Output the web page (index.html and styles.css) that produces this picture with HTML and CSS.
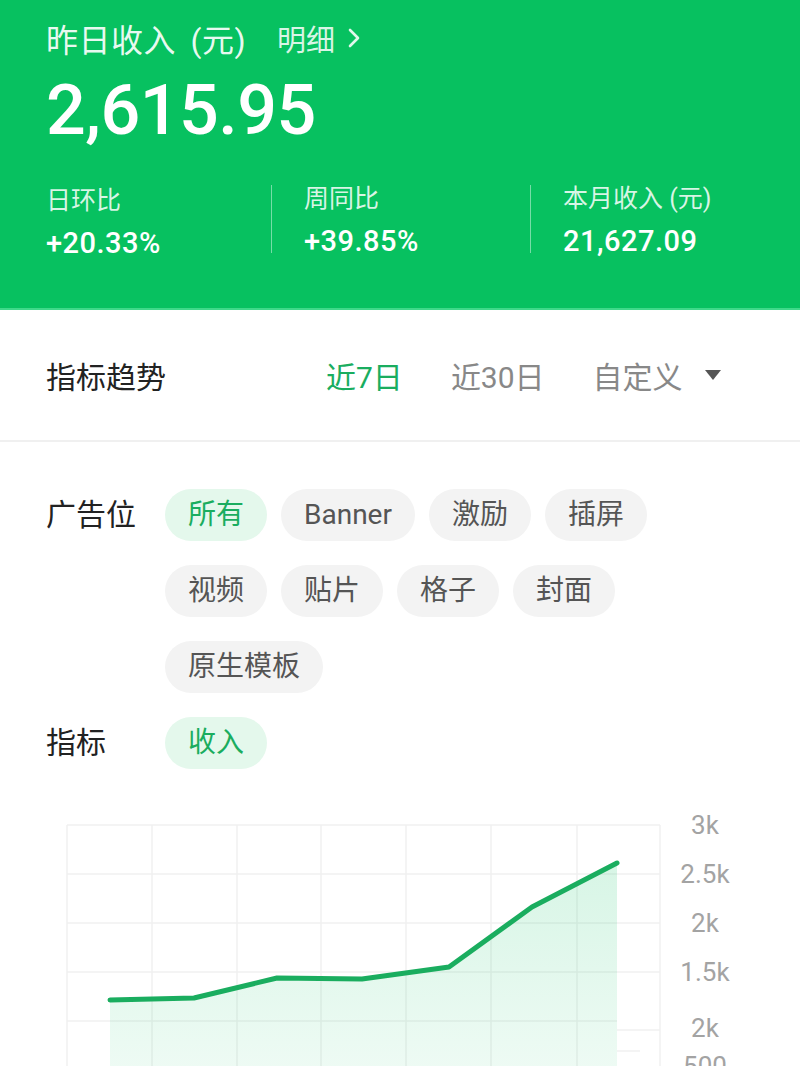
FILE: index.html
```html
<!DOCTYPE html>
<html lang="zh">
<head>
<meta charset="utf-8">
<title>收入</title>
<link rel="stylesheet" href="styles.css">
</head>
<body>
<div class="page">
  <header class="hero">
    <div class="hero-title">
      <span class="hero-label">昨日收入 (元)</span>
      <span class="hero-link">明细
        <svg class="chev" width="14" height="22" viewBox="0 0 14 22" xmlns="http://www.w3.org/2000/svg"><path d="M3 3 L11 11 L3 19" fill="none" stroke="rgba(255,255,255,0.88)" stroke-width="2.6" stroke-linecap="round" stroke-linejoin="round"/></svg>
      </span>
    </div>
    <div class="hero-amount">2,615.95</div>
    <div class="stats">
      <div class="stat">
        <div class="stat-label">日环比</div>
        <div class="stat-value">+20.33%</div>
      </div>
      <div class="stat stat-div">
        <div class="stat-label">周同比</div>
        <div class="stat-value">+39.85%</div>
      </div>
      <div class="stat stat-div">
        <div class="stat-label">本月收入 (元)</div>
        <div class="stat-value">21,627.09</div>
      </div>
    </div>
  </header>

  <section class="trend">
    <div class="trend-title">指标趋势</div>
    <div class="tabs">
      <span class="tab active">近7日</span>
      <span class="tab">近30日</span>
      <span class="tab tab-drop">自定义 <span class="tri"></span></span>
    </div>
  </section>

  <section class="filters">
    <div class="filter-row">
      <div class="filter-label">广告位</div>
      <div class="chips">
        <span class="chip on">所有</span>
        <span class="chip">Banner</span>
        <span class="chip">激励</span>
        <span class="chip">插屏</span>
        <span class="chip">视频</span>
        <span class="chip">贴片</span>
        <span class="chip">格子</span>
        <span class="chip">封面</span>
        <span class="chip">原生模板</span>
      </div>
    </div>
    <div class="filter-row">
      <div class="filter-label">指标</div>
      <div class="chips">
        <span class="chip on">收入</span>
      </div>
    </div>
  </section>

  <div class="chart">
    <svg width="800" height="266" viewBox="0 800 800 266" xmlns="http://www.w3.org/2000/svg">
      <defs>
        <linearGradient id="fillg" x1="0" y1="0" x2="0" y2="1">
          <stop offset="0" stop-color="#07c160" stop-opacity="0.16"/>
          <stop offset="1" stop-color="#07c160" stop-opacity="0.07"/>
        </linearGradient>
      </defs>
      <g stroke="#f0f0f0" stroke-width="1.5" fill="none">
        <line x1="67" y1="824" x2="660" y2="824"/>
        <line x1="67" y1="873" x2="660" y2="873"/>
        <line x1="67" y1="922" x2="660" y2="922"/>
        <line x1="67" y1="971" x2="660" y2="971"/>
        <line x1="67" y1="1020" x2="617" y2="1020"/>
        <line x1="617" y1="1029" x2="660" y2="1029"/>
        <line x1="617" y1="1050" x2="640" y2="1050"/>
        <line x1="67" y1="824" x2="67" y2="1066"/>
        <line x1="152" y1="824" x2="152" y2="1066"/>
        <line x1="237" y1="824" x2="237" y2="1066"/>
        <line x1="321" y1="824" x2="321" y2="1066"/>
        <line x1="406" y1="824" x2="406" y2="1066"/>
        <line x1="491" y1="824" x2="491" y2="1066"/>
        <line x1="577" y1="824" x2="577" y2="1066"/>
        <line x1="660" y1="824" x2="660" y2="1066"/>
      </g>
      <path d="M110 999 L194 997 L277 977 L362 978 L449 966 L532 906 L617 862 L617 1066 L110 1066 Z" fill="url(#fillg)"/>
      <path d="M110 999 L194 997 L277 977 L362 978 L449 966 L532 906 L617 862" fill="none" stroke="#1aad5f" stroke-width="5" stroke-linejoin="round" stroke-linecap="round"/>
      <g class="ylab" fill="#a3a3a3" font-size="26" text-anchor="middle">
        <text x="705" y="833">3k</text>
        <text x="705" y="882">2.5k</text>
        <text x="705" y="931">2k</text>
        <text x="705" y="980">1.5k</text>
        <text x="705" y="1036">2k</text>
        <text x="705" y="1074">500</text>
      </g>
    </svg>
  </div>
</div>
</body>
</html>
```

FILE: styles.css
```css
* { box-sizing: border-box; }
html, body { margin: 0; padding: 0; }
body {
  width: 800px;
  height: 1066px;
  overflow: hidden;
  background: #ffffff;
  font-family: Roboto, "Noto Sans CJK SC", "Noto Sans", sans-serif;
  color: #222222;
}
.page { width: 800px; }

.hero {
  height: 310px;
  background: #07c160;
  padding: 18px 0 0 46px;
  color: #ffffff;
  border-bottom: 2px solid #3fd98a;
}
.hero-title {
  display: flex;
  align-items: center;
  height: 40px;
}
.hero-label {
  font-size: 32px;
  letter-spacing: 0.5px;
  word-spacing: 6px;
  color: rgba(255,255,255,0.92);
}
.hero-link {
  display: flex;
  align-items: center;
  margin-left: 31px;
  font-size: 29px;
  color: rgba(255,255,255,0.85);
}
.chev { margin-left: 12px; display: block; }
.hero-amount {
  margin-top: 16px;
  height: 72px;
  line-height: 72px;
  font-size: 70px;
  font-weight: 500;
  letter-spacing: -0.5px;
}
.stats {
  margin-top: 36px;
  display: grid;
  grid-template-columns: 225px 259px 1fr;
}
.stat { padding-top: 2px; }
.stat-div {
  border-left: 1.5px solid rgba(255,255,255,0.45);
  padding-left: 32px;
  height: 68px;
  margin-top: 3px;
  padding-top: 0;
}
.stat-div .stat-label { margin-top: -3px; }
.stat-label {
  font-size: 25px;
  line-height: 34px;
  color: rgba(255,255,255,0.85);
}
.stat-value {
  margin-top: 7px;
  font-size: 29px;
  line-height: 36px;
  font-weight: 500;
  letter-spacing: 0.5px;
}

.trend {
  height: 132px;
  display: flex;
  align-items: center;
  padding: 0 46px;
  border-bottom: 2px solid #f0f0f0;
}
.trend-title {
  font-size: 30px;
  color: #222222;
  width: 280px;
}
.tabs {
  display: flex;
  align-items: center;
  gap: 48px;
  font-size: 30px;
  color: #888888;
}
.tab.active { color: #1aad5f; }
.tab-drop { display: flex; align-items: center; }
.tri {
  display: inline-block;
  margin-left: 22px;
  width: 0;
  height: 0;
  border-left: 8px solid transparent;
  border-right: 8px solid transparent;
  border-top: 10px solid #555555;
}

.filters {
  padding: 47px 0 0 46px;
  display: flex;
  flex-direction: column;
  gap: 24px;
}
.filter-row {
  display: flex;
  align-items: flex-start;
}
.filter-label {
  width: 119px;
  flex-shrink: 0;
  height: 52px;
  line-height: 52px;
  font-size: 30px;
  color: #222222;
}
.chips {
  display: flex;
  flex-wrap: wrap;
  column-gap: 14px;
  row-gap: 24px;
  width: 560px;
}
.chip {
  height: 52px;
  line-height: 52px;
  padding: 0 23px;
  border-radius: 26px;
  background: #f3f3f3;
  color: #555555;
  font-size: 28px;
  white-space: nowrap;
}
.chip.on {
  background: #e4f8ec;
  color: #1aad5f;
}

.chart {
  margin-top: 32px;
  height: 266px;
}
.chart svg { display: block; }
.ylab text { font-family: Roboto, "Noto Sans", sans-serif; }
```
